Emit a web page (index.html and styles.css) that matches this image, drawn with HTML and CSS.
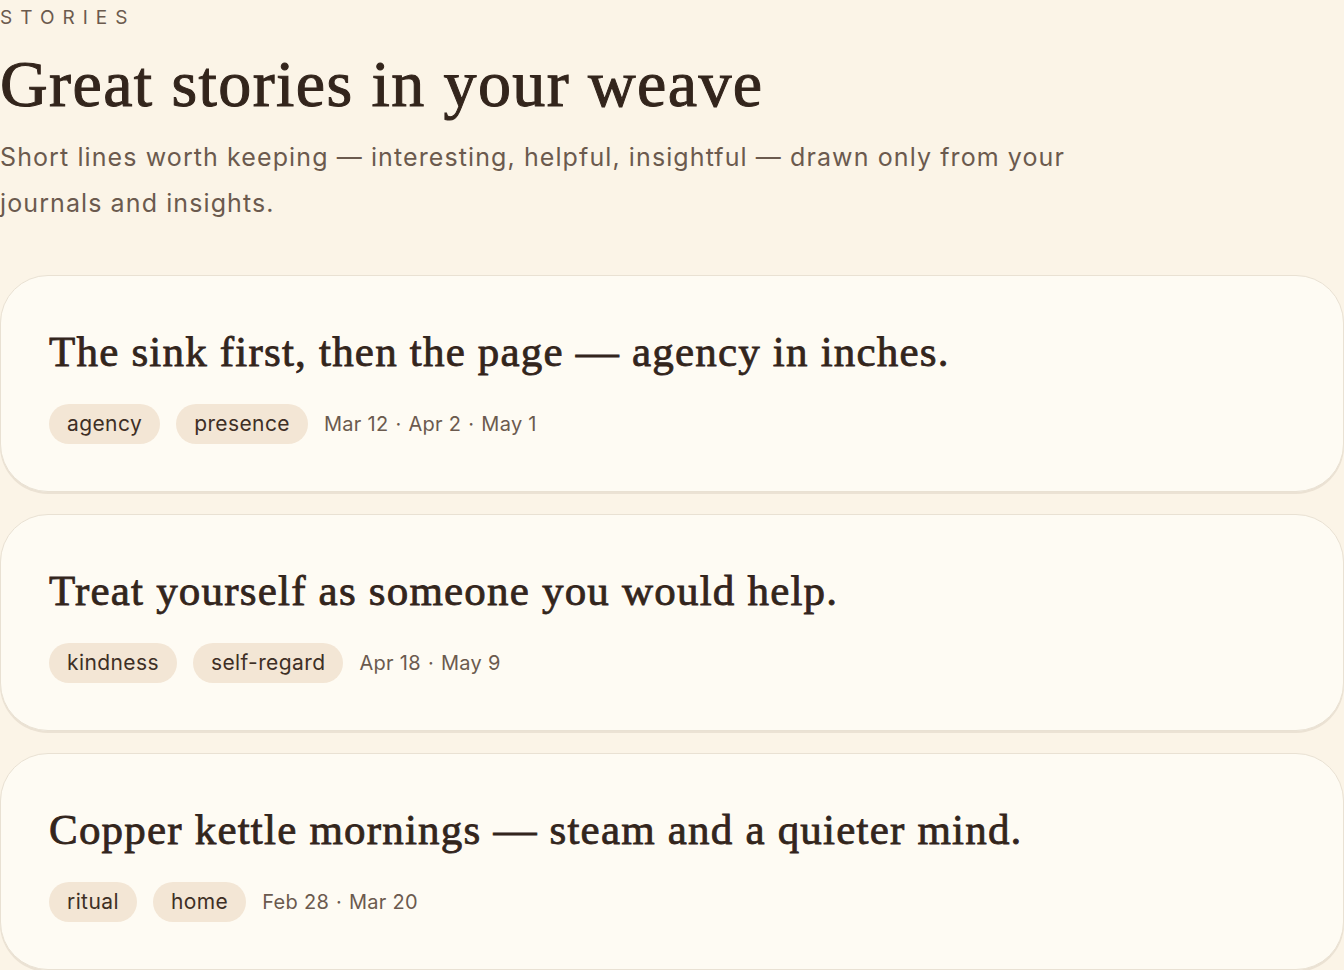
FILE: index.html
```html
<!DOCTYPE html>
<html lang="en">
<head>
    <meta charset="UTF-8">
    <title>Stories</title>
    <link rel="stylesheet" href="styles.css">
</head>
<body>

<div class="stories">
    <div class="stories__eyebrow">STORIES</div>
    <h1 class="stories__title">Great stories in your weave</h1>
    <p class="stories__lede">Short lines worth keeping — interesting, helpful, insightful — drawn only from your journals and insights.</p>

    <div class="stories__list">
        <div class="story">
            <h2 class="story__line">The sink first, then the page — agency in inches.</h2>
            <div class="story__meta">
                <span class="tag">agency</span>
                <span class="tag">presence</span>
                <span class="story__dates">Mar 12 <i>·</i> Apr 2 <i>·</i> May 1</span>
            </div>
        </div>
        <div class="story">
            <h2 class="story__line">Treat yourself as someone you would help.</h2>
            <div class="story__meta">
                <span class="tag">kindness</span>
                <span class="tag">self-regard</span>
                <span class="story__dates">Apr 18 <i>·</i> May 9</span>
            </div>
        </div>
        <div class="story">
            <h2 class="story__line">Copper kettle mornings — steam and a quieter mind.</h2>
            <div class="story__meta">
                <span class="tag">ritual</span>
                <span class="tag">home</span>
                <span class="story__dates">Feb 28 <i>·</i> Mar 20</span>
            </div>
        </div>
    </div>
</div>

</body>
</html>
```

FILE: styles.css
```css
*{
    box-sizing: border-box;
    margin:0;
    padding:0;
}
body{
    background:#fbf4e7;
    color:#33251c;
    font-family: Inter, "Liberation Sans", sans-serif;
}
.stories__eyebrow{
    font-size:19px;
    letter-spacing:8px;
    color:#6b5a4e;
    line-height:36px;
}
.stories__title{
    font-family: "Liberation Serif", serif;
    font-weight:400;
    -webkit-text-stroke:1px #33251c;
    font-size:66px;
    letter-spacing:1.4px;
    line-height:76px;
    margin-top:10px;
    color:#33251c;
}
.stories__lede{
    max-width:1100px;
    font-size:25px;
    letter-spacing:1.1px;
    line-height:46px;
    color:#6b5a4e;
    margin-top:12px;
}
.stories__list{
    margin-top:49px;
    display:flex;
    flex-direction:column;
    gap:22px;
}
.story{
    background:#fefbf3;
    border:1px solid #e9e1d3;
    border-radius:48px;
    box-shadow:0 2px 0 rgba(120,100,70,0.12);
    padding:48px 48px 47px;
}
.story__line{
    font-family: "Liberation Serif", serif;
    font-weight:400;
    -webkit-text-stroke:0.8px #33251c;
    font-size:43px;
    letter-spacing:1.2px;
    line-height:56px;
    color:#33251c;
}
.story__meta{
    margin-top:24px;
    display:flex;
    align-items:center;
    gap:16px;
}
.tag{
    background:#f3e6d5;
    border-radius:20px;
    height:40px;
    line-height:40px;
    padding:0 18px;
    font-size:21px;
    letter-spacing:0.4px;
    color:#3e2f25;
}
.story__dates{
    font-size:20px;
    letter-spacing:0.3px;
    color:#6b5a4e;
}
.story__dates i{
    font-style:normal;
    margin:0 1px;
}
```
